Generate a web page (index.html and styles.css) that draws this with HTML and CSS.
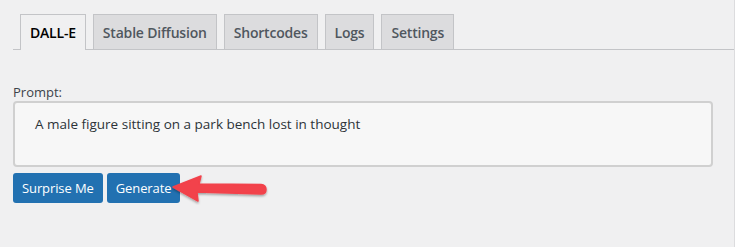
FILE: index.html
```html
<!DOCTYPE html>
<html>
<head>
<meta charset="utf-8">
<link rel="stylesheet" href="styles.css">
</head>
<body>
<div class="wrap">
  <nav class="tabs">
    <a class="tab active">DALL-E</a>
    <a class="tab">Stable Diffusion</a>
    <a class="tab">Shortcodes</a>
    <a class="tab">Logs</a>
    <a class="tab">Settings</a>
  </nav>
  <div class="panel">
    <label class="label">Prompt:</label>
    <div class="prompt">A male figure sitting on a park bench lost in thought</div>
    <div class="actions">
      <button class="btn">Surprise Me</button>
      <button class="btn">Generate</button>
    </div>
  </div>
  <svg class="arrow" width="110" height="40" viewBox="0 0 110 40">
    <defs>
      <filter id="sh" x="-20%" y="-40%" width="140%" height="180%">
        <feDropShadow dx="0" dy="1.5" stdDeviation="1.2" flood-color="#000" flood-opacity="0.35"/>
      </filter>
    </defs>
    <g filter="url(#sh)" fill="#f2424b">
      <path d="M7 22 L35 11 L33 19 L95 19.5 Q100 20 100 24.5 Q100 29 95 29 L31 27 L32 36 Z" stroke="#f2424b" stroke-width="1.5" stroke-linejoin="round"/>
    </g>
  </svg>
</div>
</body>
</html>
```

FILE: styles.css
```css
html, body {
  margin: 0;
  padding: 0;
  background: #f0f0f1;
}
body {
  font-family: "Open Sans", "Noto Sans", sans-serif;
  color: #3c434a;
  width: 735px;
  height: 247px;
  overflow: hidden;
}
.wrap {
  position: relative;
  height: 247px;
  box-sizing: border-box;
  padding-top: 14px;
  border-right: 1px solid #dcdcde;
}
.tabs {
  display: flex;
  gap: 7px;
  margin-left: 13px;
  padding-left: 7px;
  border-bottom: 1px solid #c3c4c7;
  height: 35px;
}
.tab {
  box-sizing: border-box;
  height: 35px;
  display: flex;
  align-items: center;
  padding: 0 9px;
  border: 1px solid #c3c4c7;
  border-bottom: none;
  background: #dcdcde;
  color: #50575e;
  font-size: 14px;
  font-weight: 600;
  letter-spacing: -0.2px;
}
.tab.active {
  background: #f0f0f1;
  color: #000;
  height: 36px;
  margin-bottom: -1px;
}
.panel {
  padding: 0 22px 0 13px;
}
.label {
  display: block;
  margin-top: 34px;
  font-size: 13px;
  line-height: 16px;
  color: #3c434a;
}
.prompt {
  box-sizing: border-box;
  margin-top: 1px;
  width: 700px;
  height: 66px;
  border: 2px solid #d0d0d0;
  border-radius: 4px;
  background: #f7f7f7;
  padding: 11px 20px;
  font-size: 13.5px;
  line-height: 20px;
  color: #2c3338;
}
.actions {
  display: flex;
  gap: 4px;
  margin-top: 6px;
}
.btn {
  box-sizing: border-box;
  height: 30px;
  padding: 0 9px;
  border: none;
  border-radius: 3px;
  background: #2271b1;
  color: #fff;
  font-family: "Open Sans", "Noto Sans", sans-serif;
  font-size: 13px;
  letter-spacing: -0.1px;
}
.arrow {
  position: absolute;
  left: 166px;
  top: 165px;
}
```
